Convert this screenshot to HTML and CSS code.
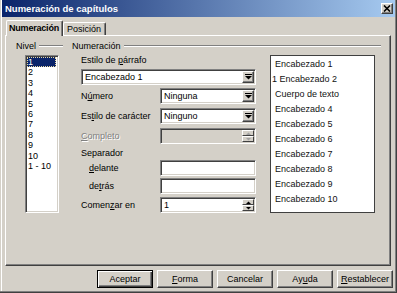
FILE: index.html
```html
<!DOCTYPE html>
<html lang="es">
<head>
  <meta charset="UTF-8" />
  <title>Numeración de capítulos</title>
  <link rel="stylesheet" href="styles.css">
</head>
<body>
  <div class="window">
    <!-- Title bar -->
    <div class="titlebar">
      <span class="title">Numeración de capítulos</span>
      <span class="closeBtn">
        <svg width="8" height="7" viewBox="0 0 8 7"><path d="M1 0.5 L7 6.5 M7 0.5 L1 6.5" stroke="#000" stroke-width="1.6" fill="none"/></svg>
      </span>
    </div>

    <!-- Tabs -->
    <div class="tabs">
      <div class="tab active">Numeración</div>
      <div class="tab">Posición</div>
    </div>

    <div class="panel">
      <!-- Nivel -->
      <div class="group levelGroup">
        <div class="legend"><span>Nivel</span></div>
        <ul class="levels">
          <li class="selected">1</li>
          <li>2</li>
          <li>3</li>
          <li>4</li>
          <li>5</li>
          <li>6</li>
          <li>7</li>
          <li>8</li>
          <li>9</li>
          <li>10</li>
          <li>1 - 10</li>
        </ul>
      </div>

      <!-- Numeración -->
      <div class="group numberingGroup">
        <div class="legend"><span>Numeración</span></div>
        <div class="numberingBody">
          <div class="fields">
            <div class="plainLabel">Estilo de <u>p</u>árrafo</div>
            <div class="combo wide">
              <span class="value">Encabezado 1</span>
              <span class="dropBtn"><svg width="7" height="6" viewBox="0 0 7 6"><rect x="0" y="0" width="7" height="1" fill="#000"/><path d="M0 2 L7 2 L3.5 5.5 Z" fill="#000"/></svg></span>
            </div>

            <div class="row r3">
              <span class="label">N<u>ú</u>mero</span>
              <div class="combo">
                <span class="value">Ninguna</span>
                <span class="dropBtn"><svg width="7" height="6" viewBox="0 0 7 6"><rect x="0" y="0" width="7" height="1" fill="#000"/><path d="M0 2 L7 2 L3.5 5.5 Z" fill="#000"/></svg></span>
              </div>
            </div>

            <div class="row r4">
              <span class="label">Es<u>t</u>ilo de carácter</span>
              <div class="combo">
                <span class="value">Ninguno</span>
                <span class="dropBtn"><svg width="7" height="6" viewBox="0 0 7 6"><rect x="0" y="0" width="7" height="1" fill="#000"/><path d="M0 2 L7 2 L3.5 5.5 Z" fill="#000"/></svg></span>
              </div>
            </div>

            <div class="row r4">
              <span class="label disabled"><u>C</u>ompleto</span>
              <div class="combo off">
                <span class="value"></span>
                <span class="spin">
                  <span class="spinHalf"><svg width="5" height="3" viewBox="0 0 5 3"><path d="M0 3 L5 3 L2.5 0.5 Z" fill="#a0a0a0"/></svg></span>
                  <span class="spinHalf"><svg width="5" height="3" viewBox="0 0 5 3"><path d="M0 0 L5 0 L2.5 2.5 Z" fill="#a0a0a0"/></svg></span>
                </span>
              </div>
            </div>

            <div class="plainLabel sep">Separador</div>

            <div class="row r2">
              <span class="label indent"><u>d</u>elante</span>
              <div class="combo"><span class="value"></span></div>
            </div>

            <div class="row r2">
              <span class="label indent">de<u>t</u>rás</span>
              <div class="combo"><span class="value"></span></div>
            </div>

            <div class="row r3">
              <span class="label">Comen<u>z</u>ar en</span>
              <div class="combo">
                <span class="value">1</span>
                <span class="spin">
                  <span class="spinHalf"><svg width="5" height="3" viewBox="0 0 5 3"><path d="M0 3 L5 3 L2.5 0.5 Z" fill="#000"/></svg></span>
                  <span class="spinHalf"><svg width="5" height="3" viewBox="0 0 5 3"><path d="M0 0 L5 0 L2.5 2.5 Z" fill="#000"/></svg></span>
                </span>
              </div>
            </div>
          </div>

          <!-- Preview -->
          <ul class="preview">
            <li>Encabezado 1</li>
            <li class="numbered">1 Encabezado 2</li>
            <li>Cuerpo de texto</li>
            <li>Encabezado 4</li>
            <li>Encabezado 5</li>
            <li>Encabezado 6</li>
            <li>Encabezado 7</li>
            <li>Encabezado 8</li>
            <li>Encabezado 9</li>
            <li>Encabezado 10</li>
          </ul>
        </div>
      </div>
    </div>

    <!-- Buttons -->
    <div class="buttons">
      <button class="btn default">Aceptar</button>
      <button class="btn"><u>F</u>orma</button>
      <button class="btn">Cancelar</button>
      <button class="btn">Ay<u>u</u>da</button>
      <button class="btn"><u>R</u>establecer</button>
    </div>
  </div>
</body>
</html>
```

FILE: styles.css
```css
body {
  margin: 0;
  font-family: "Liberation Sans", Arial, sans-serif;
  font-size: 9px;
  color: #000;
  background: #d4d0c8;
}

u {
  text-decoration-thickness: 1px;
  text-underline-offset: 1px;
}

.window {
  width: 397px;
  height: 293px;
  box-sizing: border-box;
  padding: 0 2px 2px 2px;
  background: #d4d0c8;
  box-shadow: inset -1px -1px #404040, inset -2px -2px #808080, inset 1px 0 #d4d0c8, inset 2px 0 #fff;
  display: flex;
  flex-direction: column;
}

/* Title bar */
.titlebar {
  height: 17px;
  display: flex;
  align-items: center;
  padding: 0 2px 0 3px;
  background: linear-gradient(to right, #0a246a, #a6caf0);
}

.title {
  color: #fff;
  font-weight: bold;
  font-size: 9.5px;
}

.closeBtn {
  margin-left: auto;
  width: 12px;
  height: 11px;
  box-sizing: border-box;
  background: #d4d0c8;
  border: 1px solid;
  border-color: #fff #404040 #404040 #fff;
  box-shadow: inset -1px -1px #808080;
  display: flex;
  align-items: center;
  justify-content: center;
}

/* Tabs */
.tabs {
  margin-top: 3px;
  padding-left: 4px;
  height: 15px;
  display: flex;
  align-items: flex-end;
}

.tab {
  height: 13px;
  box-sizing: border-box;
  padding: 0 4px 0 3px;
  line-height: 12px;
  border: 1px solid;
  border-bottom: none;
  border-color: #fff #404040 #fff #fff;
  box-shadow: inset -1px 0 #808080;
  border-radius: 2px 2px 0 0;
  background: #d4d0c8;
  white-space: nowrap;
}

.tab.active {
  height: 16px;
  margin-bottom: -1px;
  padding: 0 3px 0 2px;
  line-height: 14px;
  font-weight: bold;
  letter-spacing: -0.2px;
  position: relative;
  z-index: 1;
}

/* Panel */
.panel {
  margin-left: 3px;
  width: 386px;
  height: 231px;
  box-sizing: border-box;
  border: 1px solid;
  border-color: #fff #404040 #404040 #fff;
  box-shadow: inset -1px -1px #808080;
  padding: 5px 0 0 10px;
  display: flex;
  gap: 9px;
}

.legend {
  height: 10px;
  display: flex;
  align-items: center;
  color: #000;
}

.legend::after {
  content: "";
  flex: 1;
  margin-left: 3px;
  border-top: 1px solid #808080;
  border-bottom: 1px solid #fff;
}

.levelGroup {
  width: 47px;
}

.numberingGroup {
  width: 309px;
}

.levels {
  list-style: none;
  margin: 4px 0 0 9px;
  width: 34px;
  height: 158px;
  box-sizing: border-box;
  background: #fff;
  border: 1px solid;
  border-color: #808080 #fff #fff #808080;
  box-shadow: inset 1px 1px #404040, inset -1px -1px #d4d0c8;
  padding: 1px 2px 0 1px;
}

.levels li {
  height: 10.4px;
  line-height: 10.4px;
  padding-left: 1px;
}

.levels li.selected {
  background: #0a246a;
  color: #fff;
  outline: 1px dotted #e8d8a0;
  outline-offset: -1px;
}

.numberingBody {
  margin-top: 4px;
  padding-left: 9px;
  display: flex;
}

.fields {
  width: 175px;
}

.plainLabel {
  height: 11px;
  line-height: 11px;
}

.plainLabel.sep {
  margin-top: 4px;
  height: 10px;
  line-height: 10px;
}

.row {
  display: flex;
  align-items: center;
}

.row.r2 { margin-top: 2px; }
.row.r3 { margin-top: 3px; }
.row.r4 { margin-top: 4px; }

.label {
  width: 79px;
}

.label.indent {
  padding-left: 8px;
  box-sizing: border-box;
}

.label.disabled {
  color: #808080;
  text-shadow: 1px 1px #fff;
}

.combo {
  width: 96px;
  height: 16px;
  box-sizing: border-box;
  background: #fff;
  border: 1px solid;
  border-color: #808080 #fff #fff #808080;
  box-shadow: inset 1px 1px #404040, inset -1px -1px #d4d0c8;
  padding: 1px;
  display: flex;
}

.combo.wide {
  width: 175px;
  margin-top: 3px;
}

.combo.off {
  background: #d4d0c8;
}

.combo .value {
  flex: 1;
  line-height: 12px;
  padding-left: 2px;
}

.dropBtn {
  width: 12px;
  height: 12px;
  box-sizing: border-box;
  background: #d4d0c8;
  border: 1px solid;
  border-color: #fff #404040 #404040 #fff;
  box-shadow: inset -1px -1px #808080;
  display: flex;
  align-items: center;
  justify-content: center;
}

.spin {
  width: 12px;
  display: flex;
  flex-direction: column;
}

.spinHalf {
  height: 6px;
  box-sizing: border-box;
  background: #d4d0c8;
  border: 1px solid;
  border-color: #fff #404040 #404040 #fff;
  display: flex;
  align-items: center;
  justify-content: center;
}

/* Preview */
.preview {
  list-style: none;
  margin: 0 0 0 14px;
  width: 105px;
  height: 158px;
  box-sizing: border-box;
  background: #fff;
  border: 1px solid #404040;
  padding: 1px 0 0 4px;
  color: #111;
}

.preview li {
  height: 15px;
  line-height: 15px;
  white-space: nowrap;
}

.preview li.numbered {
  margin-left: -3px;
}

/* Buttons */
.buttons {
  margin-top: 4px;
  padding-right: 2px;
  display: flex;
  justify-content: flex-end;
  gap: 4px;
}

.btn {
  width: 56px;
  height: 18px;
  box-sizing: border-box;
  font-family: inherit;
  font-size: 9px;
  color: #000;
  background: #d4d0c8;
  border: 1px solid;
  border-color: #fff #404040 #404040 #fff;
  box-shadow: inset -1px -1px #808080;
  padding: 0;
}

.btn.default {
  border: 1px solid #000;
  box-shadow: inset 1px 1px #fff, inset -1px -1px #404040, inset -2px -2px #808080;
}
```
